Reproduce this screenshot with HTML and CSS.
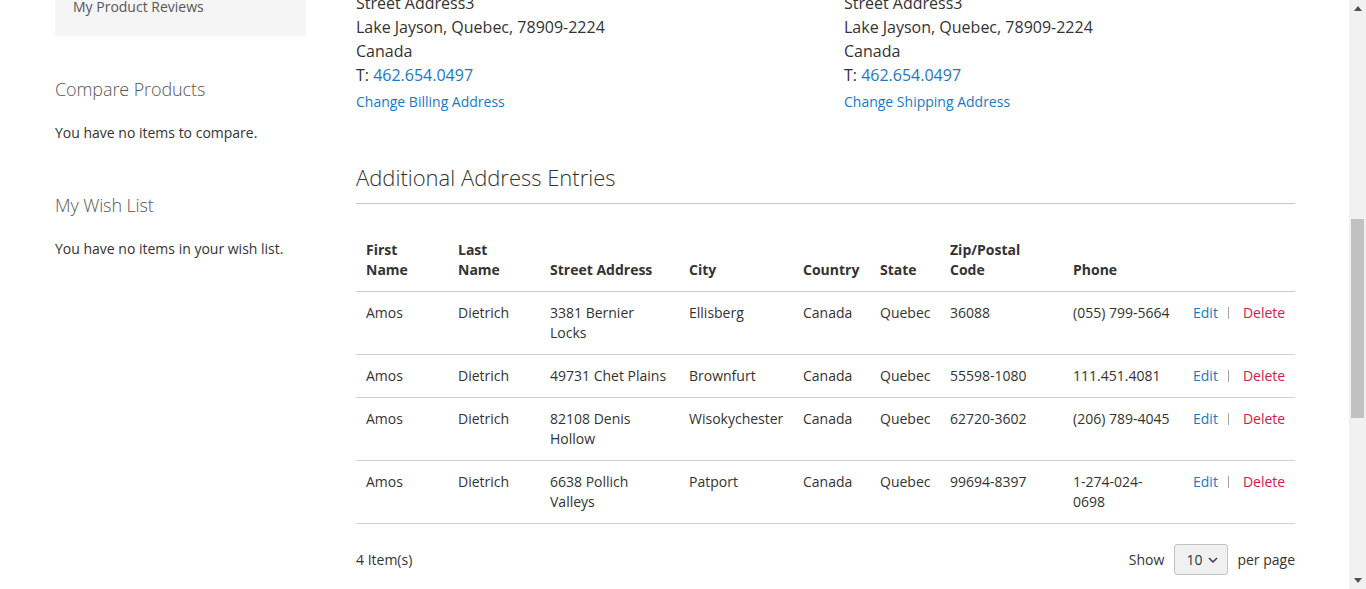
FILE: index.html
```html
<!DOCTYPE html>
<html lang="en">
<head>
<meta charset="utf-8">
<title>Address Book</title>
<link rel="stylesheet" href="styles.css">
</head>
<body>
<div class="viewport">
  <div class="page">
    <aside class="sidebar">
      <nav class="account-nav">
        <ul>
          <li>My Product Reviews</li>
        </ul>
      </nav>
      <div class="block">
        <h3 class="block-title">Compare Products</h3>
        <p class="block-empty">You have no items to compare.</p>
      </div>
      <div class="block">
        <h3 class="block-title">My Wish List</h3>
        <p class="block-empty">You have no items in your wish list.</p>
      </div>
    </aside>
    <main class="main">
      <div class="addresses">
        <div class="box">
          <address>Street Address3<br>Lake Jayson, Quebec, 78909-2224<br>Canada<br>T: <a href="#">462.654.0497</a></address>
          <a class="box-action" href="#">Change Billing Address</a>
        </div>
        <div class="box">
          <address>Street Address3<br>Lake Jayson, Quebec, 78909-2224<br>Canada<br>T: <a href="#">462.654.0497</a></address>
          <a class="box-action" href="#">Change Shipping Address</a>
        </div>
      </div>
      <h2 class="section-title">Additional Address Entries</h2>
      <table class="grid">
        <colgroup>
          <col class="c1"><col class="c2"><col class="c3"><col class="c4"><col class="c5"><col class="c6"><col class="c7"><col class="c8"><col class="c9">
        </colgroup>
        <thead>
          <tr>
            <th>First Name</th><th>Last Name</th><th>Street Address</th><th>City</th><th>Country</th><th>State</th><th>Zip/Postal Code</th><th>Phone</th><th></th>
          </tr>
        </thead>
        <tbody>
          <tr>
            <td>Amos</td><td>Dietrich</td><td>3381 Bernier Locks</td><td>Ellisberg</td><td>Canada</td><td>Quebec</td><td>36088</td><td>(055) 799-5664</td>
            <td class="actions"><a class="edit" href="#">Edit</a><span class="sep"></span><a class="delete" href="#">Delete</a></td>
          </tr>
          <tr>
            <td>Amos</td><td>Dietrich</td><td>49731 Chet Plains</td><td>Brownfurt</td><td>Canada</td><td>Quebec</td><td>55598-1080</td><td>111.451.4081</td>
            <td class="actions"><a class="edit" href="#">Edit</a><span class="sep"></span><a class="delete" href="#">Delete</a></td>
          </tr>
          <tr>
            <td>Amos</td><td>Dietrich</td><td>82108 Denis Hollow</td><td>Wisokychester</td><td>Canada</td><td>Quebec</td><td>62720-3602</td><td>(206) 789-4045</td>
            <td class="actions"><a class="edit" href="#">Edit</a><span class="sep"></span><a class="delete" href="#">Delete</a></td>
          </tr>
          <tr>
            <td>Amos</td><td>Dietrich</td><td>6638 Pollich Valleys</td><td>Patport</td><td>Canada</td><td>Quebec</td><td>99694-8397</td><td>1-274-024-0698</td>
            <td class="actions"><a class="edit" href="#">Edit</a><span class="sep"></span><a class="delete" href="#">Delete</a></td>
          </tr>
        </tbody>
      </table>
      <div class="toolbar">
        <span class="amount">4 Item(s)</span>
        <div class="limiter">
          <span>Show</span>
          <div class="select">10
            <svg width="10" height="6" viewBox="0 0 10 6"><path d="M1 1l4 4 4-4" fill="none" stroke="#333" stroke-width="1.4"/></svg>
          </div>
          <span>per page</span>
        </div>
      </div>
    </main>
  </div>
</div>
<div class="scrollbar">
  <div class="sb-btn"><svg width="8" height="5" viewBox="0 0 8 5"><path d="M4 0L8 5H0z" fill="#505050"/></svg></div>
  <div class="sb-track"><div class="sb-thumb"></div></div>
  <div class="sb-btn"><svg width="8" height="5" viewBox="0 0 8 5"><path d="M0 0H8L4 5z" fill="#505050"/></svg></div>
</div>
</body>
</html>
```
FILE: styles.css
```css
* { box-sizing: border-box; }
html, body { margin: 0; padding: 0; }
body {
  display: flex;
  height: 589px;
  overflow: hidden;
  font-family: "Open Sans", "Liberation Sans", sans-serif;
  font-size: 14px;
  line-height: 20px;
  color: #333;
  background: #fff;
}
a { color: #1979c3; text-decoration: none; }
.viewport { flex: 1; overflow: hidden; }
.page {
  display: flex;
  gap: 50px;
  padding-left: 55px;
  margin-top: -9px;
}
.sidebar { width: 251px; flex: none; }
.account-nav { background: #f5f5f5; padding: 6px 0 19px; }
.account-nav ul { list-style: none; margin: 0; padding: 0; }
.account-nav li { padding-left: 18px; color: #575757; }
.block { margin-top: 42px; }
.block + .block { margin-top: 51px; }
.block-title {
  margin: 0;
  font-size: 18px;
  line-height: 22px;
  font-weight: 300;
  color: #575757;
  letter-spacing: -0.1px;
}
.block-empty { margin: 23px 0 0; }

.main { width: 939px; flex: none; }
.addresses { display: grid; grid-template-columns: 488px 1fr; }
address { font-style: normal; font-size: 16px; line-height: 24px; }
.box-action { display: inline-block; margin-top: 5px; }
.section-title {
  margin: 51px 0 0;
  font-size: 22px;
  line-height: 28px;
  font-weight: 300;
  padding-bottom: 12px;
  border-bottom: 1px solid #c6c6c6;
}
.grid {
  width: 939px;
  margin-top: 25px;
  border-collapse: collapse;
  table-layout: fixed;
}
.c1 { width: 92px; } .c2 { width: 92px; } .c3 { width: 139px; }
.c4 { width: 114px; } .c5 { width: 77px; } .c6 { width: 70px; }
.c7 { width: 123px; } .c8 { width: 120px; } .c9 { width: 112px; }
.grid th {
  text-align: left;
  font-weight: 700;
  padding: 11px 10px;
  vertical-align: bottom;
  border-bottom: 1px solid #ccc;
}
.grid td {
  padding: 11px 10px;
  vertical-align: top;
  border-bottom: 1px solid #d1d1d1;
}
.actions { white-space: nowrap; }
.sep {
  display: inline-block;
  width: 1px;
  height: 12px;
  background: #a6a6a6;
  margin: 0 14px 0 10px;
  vertical-align: -1px;
}
.delete { color: #d6184a; }

.toolbar {
  margin-top: 20px;
  display: flex;
  justify-content: space-between;
  align-items: center;
}
.limiter { display: flex; align-items: center; gap: 10px; }
.select {
  width: 54px;
  height: 31px;
  background: #f0f0f0;
  border: 1px solid #c2c2c2;
  border-radius: 3px;
  display: flex;
  align-items: center;
  padding-left: 11px;
  gap: 6px;
  font-size: 14px;
}
.limiter span:last-child { margin-left: -1px; }

.scrollbar {
  width: 17px;
  flex: none;
  background: #f1f1f1;
  display: flex;
  flex-direction: column;
}
.sb-btn { height: 17px; display: flex; align-items: center; justify-content: center; }
.sb-track { flex: 1; padding: 202px 2px 0; }
.sb-thumb { height: 199px; background: #c1c1c1; }
```
